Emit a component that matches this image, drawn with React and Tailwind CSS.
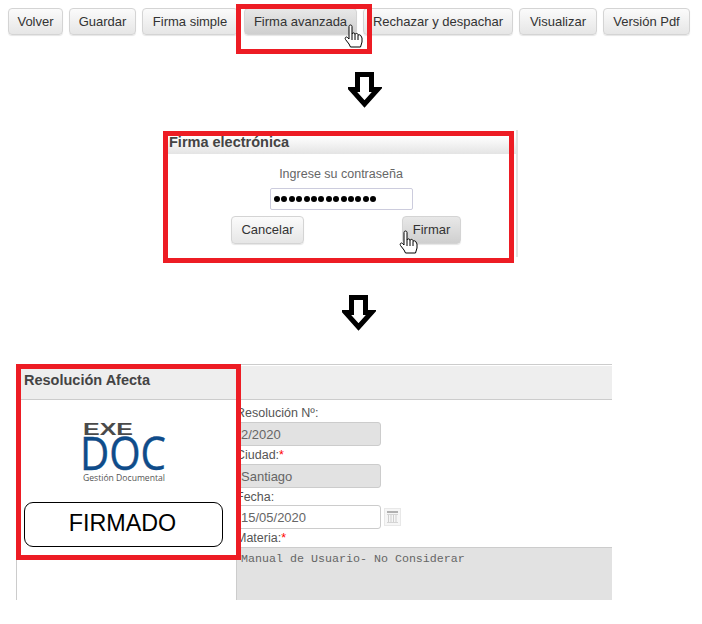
const buttons = [
  { label: 'Volver', w: 'w-[55px]' },
  { label: 'Guardar', w: 'w-[67px]' },
  { label: 'Firma simple', w: 'w-[96px]' },
  { label: 'Firma avanzada', w: 'w-[113px]', hover: true },
  { label: 'Rechazar y despachar', w: 'w-[150px]' },
  { label: 'Visualizar', w: 'w-[78px]' },
  { label: 'Versión Pdf', w: 'w-[87px]' },
];

const Btn = ({ label, className, hover }) => (
  <button
    className={`h-[27px] shrink-0 rounded-[4px] border border-[#d4d4d4] text-[13px] text-[#333] shadow-[0_1px_1px_rgba(0,0,0,0.1)] ${
      hover ? 'bg-gradient-to-b from-[#e8e8e8] to-[#cfcfcf]' : 'bg-gradient-to-b from-[#fbfbfb] to-[#e6e6e6]'
    } ${className}`}
  >
    {label}
  </button>
);

const Hand = ({ className }) => (
  <svg className={`absolute ${className}`} width="20" height="24" viewBox="0 0 20 24">
    <path
      d="M5 2.500c0-2 3-2 3 0V10c.5-1.500 2.500-1.500 3 0v.5c.5-1.500 2.500-1.500 3 0v1c.5-1 2.500-1 3 .5l1 2v4l-1.500 5H6.500L5 20 1.500 15.500c-1-1.500.5-3.500 2-2l1.500 1.500z"
      fill="#fff"
      stroke="#000"
      strokeWidth="1"
    />
    <path d="M8 10v6M11 10.500v5.500M14 11.500V16" stroke="#000" strokeWidth="1" fill="none" />
  </svg>
);

const DownArrow = ({ className }) => (
  <svg className={className} width="34" height="36" viewBox="0 0 34 36">
    <path d="M9.500 2.500h14v15h6L16.500 32 3.500 17.500h6z" fill="#fff" stroke="#000" strokeWidth="5" />
  </svg>
);

const Logo = () => (
  <svg className="ml-[66px] mt-[22px] block overflow-visible" width="84" height="62" viewBox="0 0 84 62">
    <text x="0" y="13" fontFamily="'Liberation Sans', sans-serif" fontWeight="700" fontSize="17" fill="#4a4a4a" textLength="50" lengthAdjust="spacingAndGlyphs">EXE</text>
    <text x="-3" y="48" fontFamily="'Open Sans', sans-serif" fontSize="45" fill="#0f4c8a" stroke="#0f4c8a" strokeWidth="0.4" textLength="86" lengthAdjust="spacingAndGlyphs">DOC</text>
    <text x="0" y="59" fontFamily="'Open Sans', sans-serif" fontSize="9" fill="#555" textLength="82" lengthAdjust="spacingAndGlyphs">Gestión Documental</text>
  </svg>
);

const Field = ({ label, required, short, children }) => (
  <>
    <div className={`-ml-px text-[12.500px] leading-[18px] text-[#555] ${short ? 'h-[17px]' : 'h-[18px]'}`}>
      {label}
      {required && <span className="text-[#ff0000]">*</span>}
    </div>
    {children}
  </>
);

export default function App() {
  return (
    <div className="relative h-[624px] w-[702px] overflow-hidden bg-white font-['Liberation_Sans',Arial,sans-serif]">
      <div className="flex gap-[6px] pl-2 pt-2">
        {buttons.map((b) => (
          <Btn key={b.label} label={b.label} className={b.w} hover={b.hover} />
        ))}
      </div>

      <DownArrow className="ml-[348px] mt-[37px]" />

      <div className="ml-[168px] mt-[22px] h-[127px] w-[350px] border-r-2 border-[#e3e3e3] pt-[6px]">
        <div className="h-[18px] bg-gradient-to-b from-[#ffffff] to-[#e4e4e4] pl-[1px] text-[14.500px] font-bold leading-[13px] text-[#444]">
          Firma electrónica
        </div>
        <div className="mt-[13px] pr-[2px] text-center text-[12.500px] leading-[14px] text-[#666]">Ingrese su contraseña</div>
        <div className="ml-[102px] mt-[7px] flex h-[22px] w-[143px] items-center gap-[1.400px] rounded-[2px] border border-[#ccd] bg-white pl-[3px]">
          {Array.from({ length: 14 }).map((_, i) => (
            <span key={i} className="size-[6px] rounded-full bg-black" />
          ))}
        </div>
        <div className="ml-[63px] mt-[6px] flex">
          <Btn label="Cancelar" className="!h-[28px] w-[73px]" />
          <Btn label="Firmar" className="!h-[28px] ml-[98px] w-[59px]" hover />
        </div>
      </div>

      <DownArrow className="ml-[342px] mt-[38px]" />

      <div className="ml-[16px] mt-[33px] h-[236px] w-[596px] border-l border-[#ccc]">
        <div className="h-[2px] border-t border-[#ccc]" />
        <div className="h-[34px] border-b border-[#ccc] bg-[#eeeeee] pl-[7px] pt-[6px] text-[14.500px] font-bold leading-[16px] text-[#444]">
          Resolución Afecta
        </div>
        <div className="flex h-[200px]">
          <div className="w-[219px] shrink-0">
            <Logo />
            <div className="ml-[7px] mt-[18px] flex h-[45px] w-[199px] items-center justify-center rounded-[9px] border border-black pb-[2px] pr-[2px] text-[23.300px] text-black">
              FIRMADO
            </div>
          </div>
          <div className="min-w-0 flex-1 border-l border-[#ccc] pt-[4px]">
            <Field label="Resolución Nº:">
              <div className="h-[24px] w-[144px] rounded-[3px] border border-[#ccc] bg-[#e2e2e2] pl-[3px] text-[13px] leading-[23px] text-[#666]">2/2020</div>
            </Field>
            <Field label="Ciudad:" required>
              <div className="h-[24px] w-[144px] rounded-[3px] border border-[#ccc] bg-[#e2e2e2] pl-[3px] text-[13px] leading-[23px] text-[#666]">Santiago</div>
            </Field>
            <Field label="Fecha:" short>
              <div className="flex items-center gap-[3px]">
                <div className="h-[24px] w-[144px] rounded-[3px] border border-[#ccc] bg-white pl-[3px] text-[13px] leading-[23px] text-[#666]">15/05/2020</div>
                <svg width="17" height="18" viewBox="0 0 17 18">
                  <rect x="0.500" y="0.500" width="16" height="17" fill="#f6f6f6" stroke="#e8e8e8" />
                  <rect x="3" y="3" width="11" height="2" fill="#b0b0b0" />
                  <rect x="3" y="6" width="11" height="1" fill="#d4d4d4" />
                  <path d="M4.500 7v7M7 7v7M9.500 7v7M12 7v7" stroke="#cfcfcf" />
                  <rect x="3" y="14" width="11" height="1" fill="#d4d4d4" />
                </svg>
              </div>
            </Field>
            <Field label="Materia:" required>
              <div className="h-[53px] border-t border-[#ccc] bg-[#e2e2e2] pl-[4px] pt-[4px] font-['Liberation_Mono',monospace] text-[11.670px] leading-[14px] text-[#666]">
                Manual de Usuario- No Considerar
              </div>
            </Field>
          </div>
        </div>
      </div>

      {/* anotaciones en rojo sobre la captura */}
      <div className="absolute left-[236px] top-[4px] h-[50px] w-[136px] border-[5px] border-[#ed1c24]" />
      <div className="absolute left-[163px] top-[131px] h-[132px] w-[351px] border-[5px] border-[#ed1c24]" />
      <div className="absolute left-[16px] top-[364px] h-[196px] w-[225px] border-[5px] border-[#ed1c24]" />
      <Hand className="left-[344px] top-[24px]" />
      <Hand className="left-[399px] top-[230px]" />
    </div>
  );
}
